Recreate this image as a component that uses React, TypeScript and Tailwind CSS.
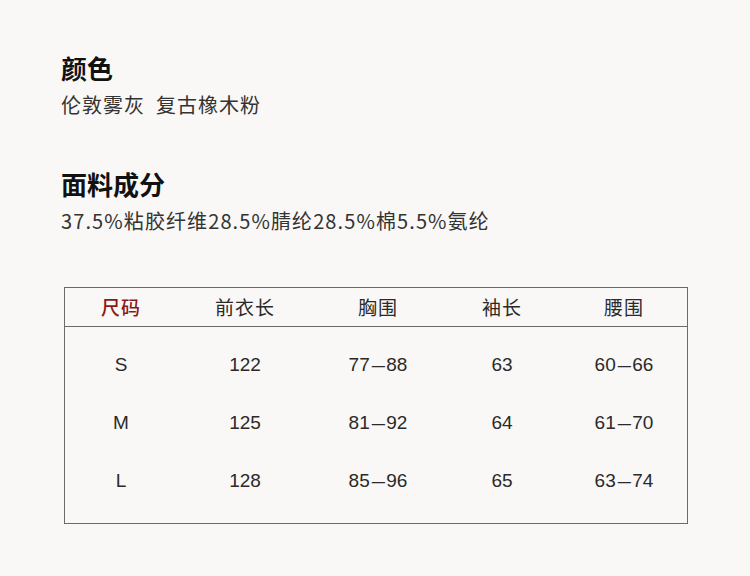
const cols = ["w-[112px]", "w-[136px]", "w-[130px]", "w-[118px]", "flex-1"];

const headers = ["尺码", "前衣长", "胸围", "袖长", "腰围"];

const rows = [
  ["S", "122", "77–88", "63", "60–66"],
  ["M", "125", "81–92", "64", "61–70"],
  ["L", "128", "85–96", "65", "63–74"],
];

function Cell({ value }: { value: string }) {
  const parts = value.split("–");
  if (parts.length < 2) return <>{value}</>;
  return (
    <>
      {parts[0]}
      <span className="mx-[3px] inline-block scale-x-125">–</span>
      {parts[1]}
    </>
  );
}

export default function App() {
  return (
    <div className="h-[576px] w-[750px] bg-[#f9f8f6] pl-[61px] pt-[51px] font-['Noto_Sans_CJK_SC',sans-serif]">
      <h2 className="text-[26px] font-bold leading-[34px] text-[#111]">颜色</h2>
      <p className="mt-[5px] text-[20px] leading-[30px] tracking-[1px] text-[#333]">伦敦雾灰&nbsp;&nbsp;复古橡木粉</p>

      <h2 className="mt-[47px] text-[26px] font-bold leading-[34px] text-[#111]">面料成分</h2>
      <p className="mt-[5px] text-[20px] leading-[30px] tracking-[1.1px] text-[#333]">
        37.5%粘胶纤维28.5%腈纶28.5%棉5.5%氨纶
      </p>

      <div className="ml-[3px] mt-[51px] w-[624px] border border-[#6b6b6b] font-['Liberation_Sans','Noto_Sans_CJK_SC',sans-serif] text-[19px] text-[#2a2a2a]">
        <div className="flex h-[39px] items-center border-b border-[#6b6b6b]">
          {headers.map((h, i) => (
            <div
              key={h}
              className={`${cols[i]} text-center font-['Noto_Sans_CJK_SC',sans-serif] tracking-[1px] ${i === 0 ? "font-medium text-[#8a1a1a]" : ""}`}
            >
              {h}
            </div>
          ))}
        </div>
        <div className="pb-[13px] pt-[9px]">
          {rows.map((r) => (
            <div key={r[0]} className="flex h-[58px] items-center">
              {r.map((c, i) => (
                <div key={i} className={`${cols[i]} text-center`}>
                  <Cell value={c} />
                </div>
              ))}
            </div>
          ))}
        </div>
      </div>
    </div>
  );
}
